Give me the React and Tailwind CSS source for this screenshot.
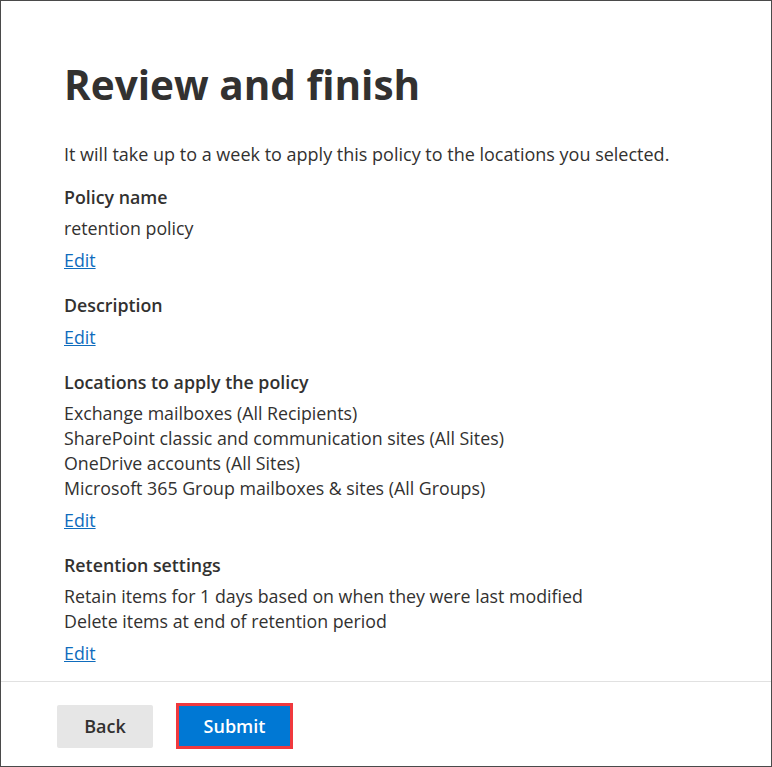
export default function App() {
  const sections = [
    { title: 'Policy name', lines: ['retention policy'] },
    { title: 'Description', lines: [] },
    {
      title: 'Locations to apply the policy',
      lines: [
        'Exchange mailboxes (All Recipients)',
        'SharePoint classic and communication sites (All Sites)',
        'OneDrive accounts (All Sites)',
        'Microsoft 365 Group mailboxes & sites (All Groups)',
      ],
    },
    {
      title: 'Retention settings',
      lines: [
        'Retain items for 1 days based on when they were last modified',
        'Delete items at end of retention period',
      ],
    },
  ];

  return (
    <div
      className="w-[772px] h-[767px] bg-white border border-[#4a4a4a] flex flex-col text-[#323130]"
      style={{ fontFamily: '"Open Sans", "Noto Sans", sans-serif' }}
    >
      {/* Body */}
      <div className="flex-1 pl-[63px] pr-8 pt-[56px]">
        <h1 className="text-[40.5px] leading-[56px] font-bold">Review and finish</h1>

        <p className="mt-[29px] text-[18px] leading-[25px]">
          It will take up to a week to apply this policy to the locations you selected.
        </p>

        <div className="mt-[18px] flex flex-col gap-[20px]">
          {sections.map((section) => (
            <div key={section.title} className="flex flex-col">
              <h3 className="text-[17.8px] leading-[25px] font-semibold">{section.title}</h3>
              {section.lines.length > 0 && (
                <div className="mt-[6px] text-[17.8px] leading-[25px]">
                  {section.lines.map((line) => (
                    <div key={line}>{line}</div>
                  ))}
                </div>
              )}
              <a href="#" className="mt-[7px] text-[17.8px] leading-[25px] text-[#0f6cbd] underline w-fit">
                Edit
              </a>
            </div>
          ))}
        </div>
      </div>

      {/* Footer */}
      <div className="border-t border-[#e1e1e1] h-[85px] pl-[56px] pt-[21px] flex items-start gap-[23px]">
        <button className="mt-[2px] w-[96px] h-[43px] rounded-[2px] bg-[#e6e6e6] text-[18px] font-semibold text-[#323130]">
          Back
        </button>
        <button className="w-[117px] h-[46px] border-[3px] border-[#f0393e] bg-[#0078d4] text-[18px] font-semibold text-white">
          Submit
        </button>
      </div>
    </div>
  );
}
